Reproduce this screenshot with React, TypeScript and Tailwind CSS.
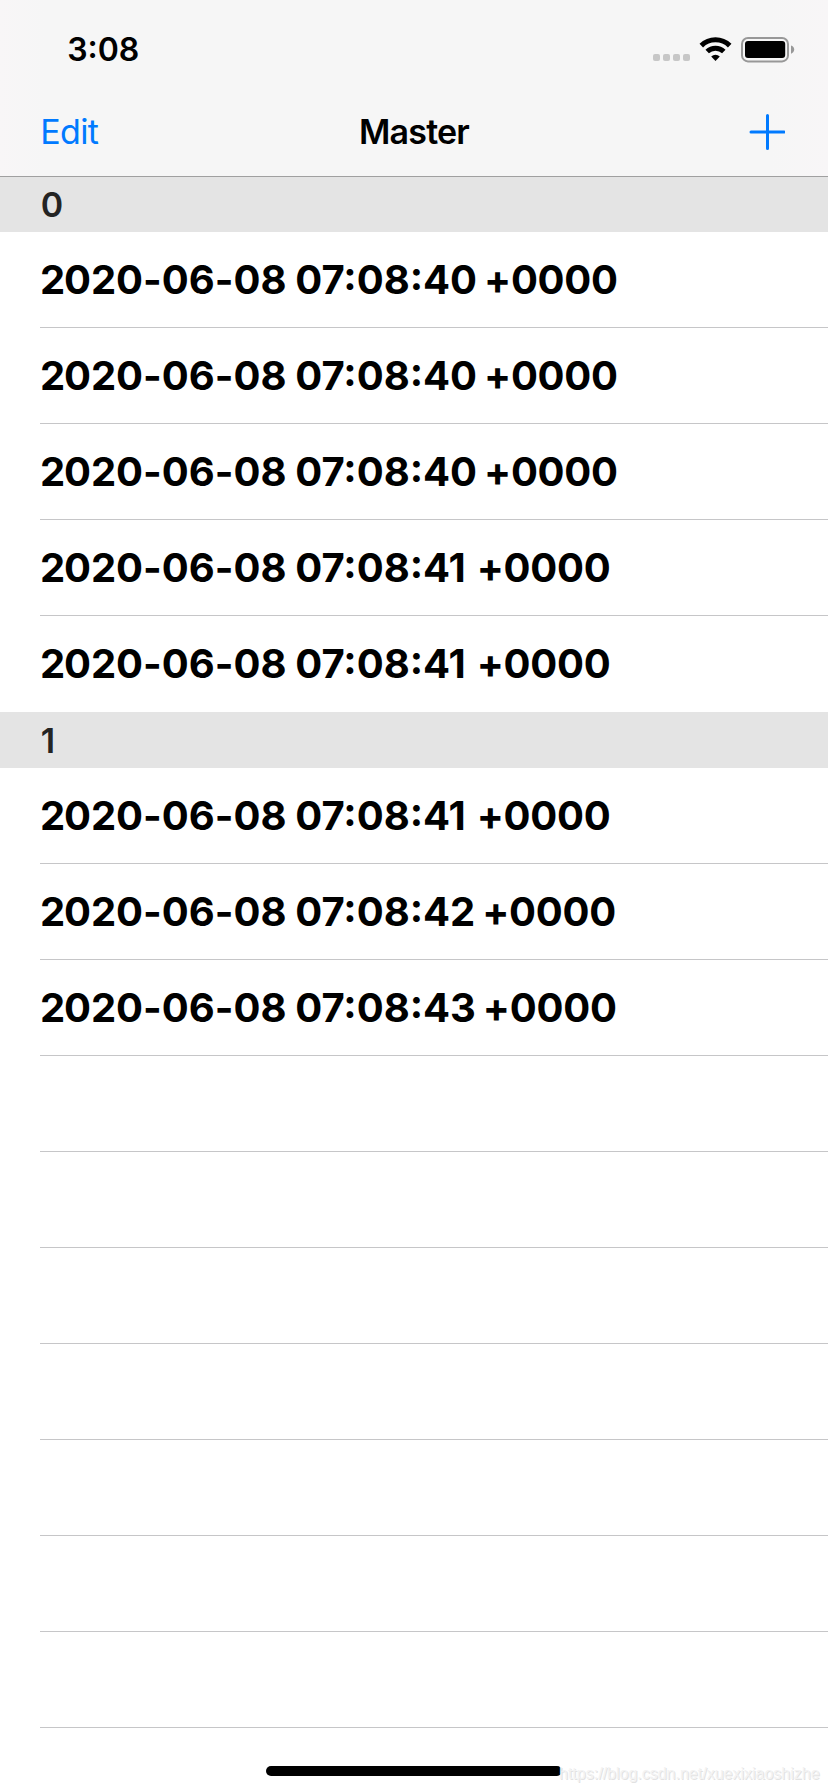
type Section = { title: string; rows: string[] };

const sections: Section[] = [
  {
    title: "0",
    rows: [
      "2020-06-08 07:08:40 +0000",
      "2020-06-08 07:08:40 +0000",
      "2020-06-08 07:08:40 +0000",
      "2020-06-08 07:08:41 +0000",
      "2020-06-08 07:08:41 +0000",
    ],
  },
  {
    title: "1",
    rows: [
      "2020-06-08 07:08:41 +0000",
      "2020-06-08 07:08:42 +0000",
      "2020-06-08 07:08:43 +0000",
    ],
  },
];

const EMPTY_ROWS = 7;

function StatusIcons() {
  return (
    <svg className="block h-[30px] w-[144px]" viewBox="652 34 144 30" fill="none">
      {[653, 663, 673, 683].map((x) => (
        <rect key={x} x={x} y="54" width="7" height="7" rx="2" fill="#c7c7c7" />
      ))}
      <path d="M701.3 45.6A20.2 20.2 0 0 1 729.7 45.6" stroke="#000" strokeWidth="5" />
      <path d="M707.2 51.6A11.8 11.8 0 0 1 723.8 51.6" stroke="#000" strokeWidth="4.9" />
      <path d="M711.2 56.5A6.2 6.2 0 0 1 719.8 56.5L715.5 61Z" fill="#000" />
      <rect x="742" y="38" width="46" height="23.4" rx="6" stroke="#989898" strokeWidth="2" />
      <rect x="745" y="41" width="40.2" height="17" rx="3" fill="#000" />
      <path d="M791 45.5C793 46 794.2 47.8 794.2 49.6S793 53.2 791 53.7Z" fill="#989898" />
    </svg>
  );
}

/* Hyphens and the plus sign sit at lowercase height; only the colons in the time are raised. */
function Timestamp({ value }: { value: string }) {
  const [date, time, zone] = value.split(" ");
  return (
    <span className="whitespace-pre">
      <span className="tracking-[-1.3px]">{date[0]}</span>
      <span className="[font-feature-settings:'calt'_0]">{date.slice(1)}</span>{" "}
      <span className="-ml-[0.7px]">{time}</span>{" "}
      <span className={"tracking-[-0.25px] " + (time.endsWith("1") ? "ml-[1.4px]" : "-ml-[2.6px]")}>{zone}</span>
    </span>
  );
}

function Row({ text, last }: { text?: string; last?: boolean }) {
  return (
    <li className="h-24 pl-10">
      <div
        className={
          "flex h-full items-center border-b text-[40px] leading-none font-bold text-black " +
          (last ? "border-transparent" : "border-[#c6c6c8]")
        }
      >
        {text && <Timestamp value={text} />}
      </div>
    </li>
  );
}

export default function App() {
  return (
    <div className="relative h-[1792px] w-[828px] overflow-hidden bg-white font-['Inter',sans-serif]">
      <header className="h-[177px] border-b border-[#a0a0a0] bg-[linear-gradient(90deg,#f8f6f7,#f6f6f6_45px,#f6f6f6_770px,#f8f6f7)]">
        <div className="flex h-[88px] items-start justify-between pt-[34px] pr-8 pl-[67.2px]">
          <span className="pt-[2px] text-[32px] leading-[28px] font-semibold">3:08</span>
          <StatusIcons />
        </div>
        <div className="grid h-[88px] grid-cols-3 items-center px-10">
          <button className="pl-[0.3px] text-left text-[34px] leading-none tracking-[-0.7px] text-[#007aff]">Edit</button>
          <h1 className="text-center text-[34px] leading-none font-semibold tracking-[-0.8px]">Master</h1>
          <button className="justify-self-end pr-[3px]" aria-label="Add">
            <svg className="block size-9" viewBox="0 0 36 36" stroke="#007aff" strokeWidth="3" strokeLinecap="round">
              <path d="M18.5 1.5V34.5M2 18H35" />
            </svg>
          </button>
        </div>
      </header>
      <main>
        {sections.map((s, i) => (
          <section key={s.title}>
            <h2
              className={
                "flex items-center bg-[#e4e4e4] pl-[40.8px] text-[34px] leading-none font-semibold text-[#242424] " +
                (i === 0 ? "h-[55px]" : "h-14 pt-px")
              }
            >
              {s.title}
            </h2>
            <ul>
              {s.rows.map((r, j) => (
                <Row key={j} text={r} last={i === 0 && j === s.rows.length - 1} />
              ))}
            </ul>
          </section>
        ))}
        <ul>
          {Array.from({ length: EMPTY_ROWS }, (_, i) => (
            <Row key={i} />
          ))}
        </ul>
      </main>
      <div className="absolute top-[1766px] left-[266px] h-[10px] w-[296px] rounded-full bg-black" />
      <div className="absolute top-[1765px] left-[559px] font-['Liberation_Sans',sans-serif] text-[16px] leading-[18px] whitespace-nowrap text-[#f3f3f3] [text-shadow:1px_1px_0_#e2e2e2]">
        https://blog.csdn.net/xuexixiaoshizhe
      </div>
    </div>
  );
}
